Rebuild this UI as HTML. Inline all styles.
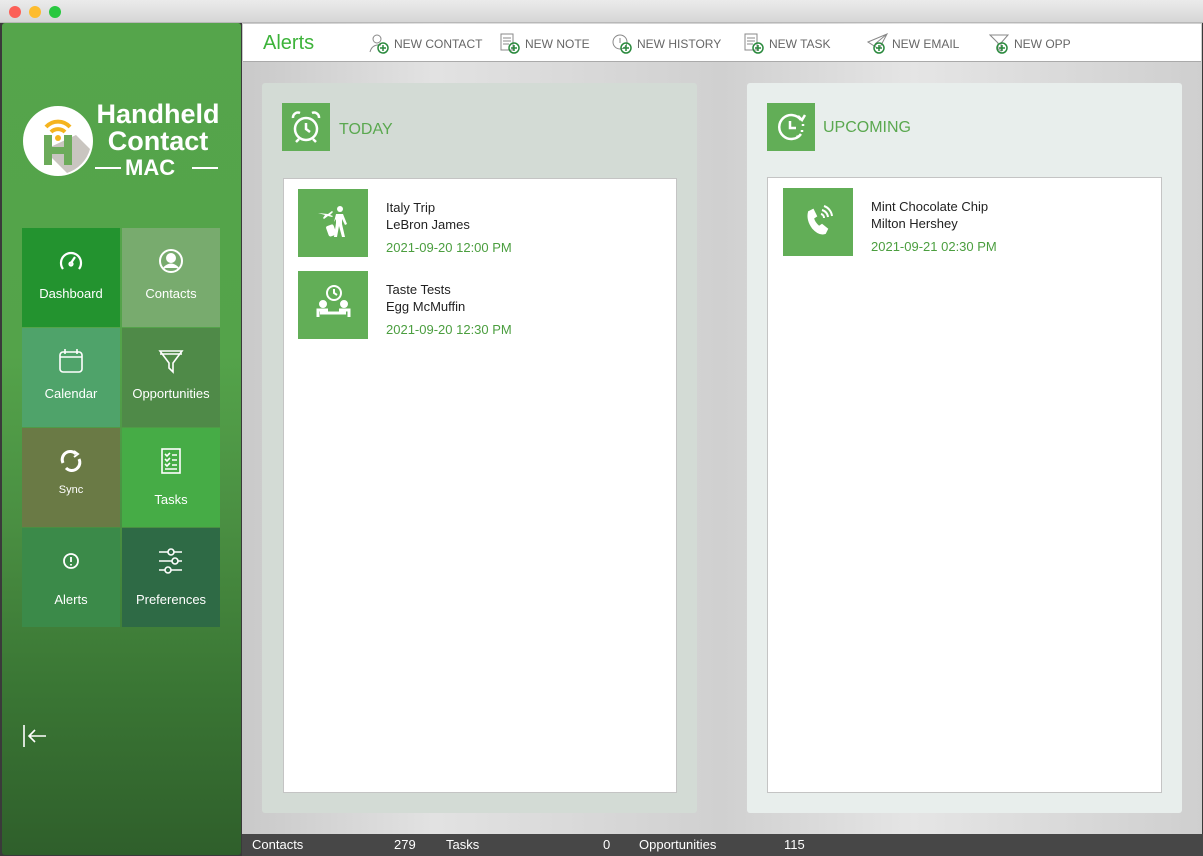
<!DOCTYPE html>
<html><head><meta charset="utf-8"><style>
*{margin:0;padding:0;box-sizing:border-box}
body{width:1203px;height:856px;overflow:hidden;font-family:"Liberation Sans",sans-serif;background:#3a3a3a;position:relative}
.abs{position:absolute}
.title{left:0;top:0;width:1203px;height:23px;background:linear-gradient(#ebebeb,#d6d6d6);border-bottom:1px solid #b8b8b8}
.dot{top:6px;width:12px;height:12px;border-radius:50%}
.side{left:2px;top:23px;width:239px;height:832px;background:linear-gradient(#55a54b 0%,#54a34a 40%,#4a8f42 60%,#3a7634 80%,#2f5f2b 100%);border-radius:3px}
.tile{width:98px;height:99px;color:#fff;font-size:13px;text-align:center}
.tile svg{position:absolute;left:36px;top:20px}
.tile span{position:absolute;left:0;right:0;top:58px}
.main{left:242px;top:23px;width:960px;height:811px;background:linear-gradient(90deg,#c9c9c9,#e2e2e2 20%,#d0d0d0 50%,#e5e5e5 70%,#cfcfcf)}
.hdr{left:243px;top:24px;width:958px;height:38px;background:#fff;border-bottom:1px solid #aaa}
.tb{top:9px;font-size:12px;color:#666;display:flex;align-items:center}
.tb svg{margin-right:3px}
.ic{width:70px;height:68px;background:#62ae57}
.it{font-size:13px;color:#222;line-height:17px}
.dt{font-size:13px;color:#4b9e3f}
.status{left:242px;top:834px;width:961px;height:22px;background:#474747;color:#fff;font-size:13px}
.status span{position:absolute;top:3px}
</style></head><body>
<div class="abs title"></div>
<div class="abs dot" style="left:9px;background:#fc5f57"></div>
<div class="abs dot" style="left:29px;background:#fdbc2e"></div>
<div class="abs dot" style="left:49px;background:#29c840"></div>

<div class="abs side">
 <svg class="abs" style="left:20px;top:82px" width="72" height="72" viewBox="0 0 72 72">
  <circle cx="36" cy="36" r="35" fill="#fff"/>
  <path d="M22 45 L45 68 A35 35 0 0 0 68 44 L54 30 Z" fill="#c9c5c0"/>
  <rect x="22" y="30" width="8" height="30" fill="#6cab5a"/><rect x="42" y="30" width="8" height="30" fill="#6cab5a"/><rect x="22" y="42" width="28" height="7" fill="#6cab5a"/>
  <path d="M24 22 A16 16 0 0 1 48 22" stroke="#f5b41f" stroke-width="4" fill="none"/>
  <path d="M29 27 A10 10 0 0 1 43 27" stroke="#f5b41f" stroke-width="4" fill="none"/>
  <circle cx="36" cy="33" r="3" fill="#f5b41f"/>
 </svg>
 <div class="abs" style="left:92px;top:78px;color:#fff;font-weight:bold;font-size:27px;line-height:27px;text-align:center;width:128px">Handheld<br>Contact</div>
 <div class="abs" style="left:93px;top:144px;width:26px;height:2px;background:#fff"></div>
 <div class="abs" style="left:123px;top:132px;color:#fff;font-weight:bold;font-size:22px">MAC</div>
 <div class="abs" style="left:190px;top:144px;width:26px;height:2px;background:#fff"></div>

 <div class="abs tile" style="left:20px;top:205px;background:#23932f"><svg width="26" height="26" viewBox="0 0 26 26" fill="none" stroke="#fff" stroke-width="2.2"><path d="M5 21 A10 10 0 1 1 21 21"/><path d="M13 15 L17 9"/><circle cx="13" cy="16" r="1.5"/></svg><span>Dashboard</span></div>
 <div class="abs tile" style="left:120px;top:205px;background:#78ab6e"><svg width="26" height="26" viewBox="0 0 26 26" fill="none" stroke="#fff" stroke-width="2"><circle cx="13" cy="13" r="11"/><circle cx="13" cy="10" r="4" fill="#fff"/><path d="M6 20 Q13 13 20 20" fill="#fff"/></svg><span>Contacts</span></div>
 <div class="abs tile" style="left:20px;top:305px;background:#4fa36a"><svg width="26" height="26" viewBox="0 0 26 26" fill="none" stroke="#fff" stroke-width="1.6"><rect x="2" y="4" width="22" height="20" rx="3"/><path d="M2 9 H24 M7 1 V6 M19 1 V6"/></svg><span>Calendar</span></div>
 <div class="abs tile" style="left:120px;top:305px;background:#4f8a48"><svg width="26" height="26" viewBox="0 0 26 26" fill="none" stroke="#fff" stroke-width="1.6"><path d="M2 3 H24 L15 15 V24 L11 20 V15 Z"/><path d="M2 6 H24"/></svg><span>Opportunities</span></div>
 <div class="abs tile" style="left:20px;top:405px;background:#6a7a45"><svg width="26" height="26" viewBox="0 0 26 26" fill="none" stroke="#fff" stroke-width="3"><path d="M5 15 A8 8 0 0 1 18 6"/><path d="M21 11 A8 8 0 0 1 8 20"/><path d="M16 3 L20 6 L16 9" stroke-width="2"/></svg><span style="font-size:11px;top:56px">Sync</span></div>
 <div class="abs tile" style="left:120px;top:405px;background:#46ac46"><svg width="26" height="26" viewBox="0 0 26 26" fill="none" stroke="#fff" stroke-width="1.6"><rect x="4" y="1" width="18" height="24"/><path d="M7 6 l2 2 3-3 M14 7 H19 M7 11 l2 2 3-3 M14 12 H19 M7 16 l2 2 3-3 M14 17 H19 M7 21 H19"/></svg><span style="top:64px">Tasks</span></div>
 <div class="abs tile" style="left:20px;top:505px;background:#3b8a49"><svg width="26" height="26" viewBox="0 0 26 26" fill="none" stroke="#fff" stroke-width="1.8"><circle cx="13" cy="13" r="7"/><path d="M13 9 V14 M13 16 V17.5"/></svg><span style="top:64px">Alerts</span></div>
 <div class="abs tile" style="left:120px;top:505px;background:#2e6a45"><svg width="26" height="26" viewBox="0 0 26 26" fill="none" stroke="#fff" stroke-width="1.6"><path d="M1 4 H24 M1 13 H24 M1 22 H24"/><circle cx="13" cy="4" r="3" fill="#2e6a45"/><circle cx="17" cy="13" r="3" fill="#2e6a45"/><circle cx="10" cy="22" r="3" fill="#2e6a45"/></svg><span style="top:64px">Preferences</span></div>

 <svg class="abs" style="left:20px;top:700px" width="26" height="26" viewBox="0 0 26 26" fill="none" stroke="#fff" stroke-width="1.6"><path d="M2 2 V24 M24 13 H7 M13 7 L7 13 L13 19"/></svg>
</div>

<div class="abs main"></div>
<div class="abs hdr">
 <div class="abs" style="left:20px;top:8px;font-size:20px;color:#3db33a">Alerts</div>
 <div class="abs tb" style="left:126px"><svg width="22" height="22" viewBox="0 0 22 22" fill="none" stroke="#888" stroke-width="1"><circle cx="8" cy="6" r="4"/><path d="M1 19 Q3 11 12 12"/><circle cx="14" cy="15" r="5" stroke="#2b8a3e" stroke-width="1.5"/><path d="M14 12 V18 M11 15 H17" stroke="#2b8a3e" stroke-width="1.5"/></svg>NEW CONTACT</div>
 <div class="abs tb" style="left:257px"><svg width="22" height="22" viewBox="0 0 22 22" fill="none" stroke="#888" stroke-width="1"><rect x="1" y="1" width="12" height="16"/><path d="M3 5 H11 M3 8 H11 M3 11 H9"/><circle cx="14" cy="15" r="5" stroke="#2b8a3e" stroke-width="1.5"/><path d="M14 12 V18 M11 15 H17" stroke="#2b8a3e" stroke-width="1.5"/></svg>NEW NOTE</div>
 <div class="abs tb" style="left:369px"><svg width="22" height="22" viewBox="0 0 22 22" fill="none" stroke="#888" stroke-width="1"><circle cx="8" cy="9" r="7"/><path d="M8 5 V10"/><circle cx="14" cy="15" r="5" stroke="#2b8a3e" stroke-width="1.5"/><path d="M14 12 V18 M11 15 H17" stroke="#2b8a3e" stroke-width="1.5"/></svg>NEW HISTORY</div>
 <div class="abs tb" style="left:501px"><svg width="22" height="22" viewBox="0 0 22 22" fill="none" stroke="#888" stroke-width="1"><rect x="1" y="1" width="12" height="16"/><path d="M3 5 H11 M3 8 H11 M3 11 H9"/><circle cx="14" cy="15" r="5" stroke="#2b8a3e" stroke-width="1.5"/><path d="M14 12 V18 M11 15 H17" stroke="#2b8a3e" stroke-width="1.5"/></svg>NEW TASK</div>
 <div class="abs tb" style="left:624px"><svg width="22" height="22" viewBox="0 0 22 22" fill="none" stroke="#888" stroke-width="1"><path d="M1 9 L20 1 L12 16 Z M20 1 L8 11"/><circle cx="12" cy="15" r="5" stroke="#2b8a3e" stroke-width="1.5"/><path d="M12 12 V18 M9 15 H15" stroke="#2b8a3e" stroke-width="1.5"/></svg>NEW EMAIL</div>
 <div class="abs tb" style="left:746px"><svg width="22" height="22" viewBox="0 0 22 22" fill="none" stroke="#888" stroke-width="1"><path d="M1 2 H19 L12 10 V18 L9 16 V10 Z"/><circle cx="13" cy="15" r="5" stroke="#2b8a3e" stroke-width="1.5"/><path d="M13 12 V18 M10 15 H16" stroke="#2b8a3e" stroke-width="1.5"/></svg>NEW OPP</div>
</div>

<div class="abs" style="left:262px;top:83px;width:435px;height:730px;background:#d3dbd5;border-radius:3px"></div>
<div class="abs ic" style="left:282px;top:103px;width:48px;height:48px"><svg width="48" height="48" viewBox="0 0 48 48" fill="none" stroke="#fff" stroke-width="2.5"><circle cx="24" cy="26" r="11"/><path d="M24 20 V26 L28 29 M11 15 A5 5 0 0 1 18 10 M37 15 A5 5 0 0 0 30 10 M17 36 L14 39 M31 36 L34 39"/></svg></div>
<div class="abs" style="left:339px;top:121px;font-size:16px;color:#5aa84f">TODAY</div>
<div class="abs" style="left:283px;top:178px;width:394px;height:615px;background:#fff;border:1px solid #c4c4c4"></div>
<div class="abs ic" style="left:298px;top:189px"><svg width="70" height="68" viewBox="0 0 70 68" fill="#fff"><path d="M20 24 l10 1 4-3 1 1-3 3 3 1-1 1-4-1-4 3-1-1 2-3z"/><circle cx="42" cy="20" r="3"/><path d="M38 25 h7 l4 10 -2 1 -3-6 v5 l3 13 h-3 l-3-11 -2 11 h-3 l2-14 v-4 l-2 3z"/><rect x="29" y="36" width="8" height="11" rx="2" transform="rotate(-20 33 41)"/></svg></div>
<div class="abs it" style="left:386px;top:199px">Italy Trip<br>LeBron James</div>
<div class="abs dt" style="left:386px;top:240px">2021-09-20 12:00 PM</div>
<div class="abs ic" style="left:298px;top:271px"><svg width="70" height="68" viewBox="0 0 70 68" fill="none" stroke="#fff" stroke-width="2"><circle cx="36" cy="22" r="7"/><path d="M36 18 V22 L39 24"/><circle cx="25" cy="33" r="3" fill="#fff"/><circle cx="46" cy="33" r="3" fill="#fff"/><path d="M20 46 V39 H30 M51 46 V39 H41 M22 42 H48" stroke-width="3"/></svg></div>
<div class="abs it" style="left:386px;top:281px">Taste Tests<br>Egg McMuffin</div>
<div class="abs dt" style="left:386px;top:322px">2021-09-20 12:30 PM</div>

<div class="abs" style="left:747px;top:83px;width:435px;height:730px;background:#e8eeec;border-radius:3px"></div>
<div class="abs ic" style="left:767px;top:103px;width:48px;height:48px"><svg width="48" height="48" viewBox="0 0 48 48" fill="none" stroke="#fff" stroke-width="2.5"><path d="M34 17 A12 12 0 1 0 34 31" /><path d="M23 18 V25 H29"/><path d="M36 21 V23 M35 27 V29 M31 33 l-1 1" stroke-dasharray="2 2"/><path d="M31 13 l4 4 3-5"/></svg></div>
<div class="abs" style="left:823px;top:119px;font-size:16px;color:#5aa84f">UPCOMING</div>
<div class="abs" style="left:767px;top:177px;width:395px;height:616px;background:#fff;border:1px solid #c4c4c4"></div>
<div class="abs ic" style="left:783px;top:188px"><svg width="70" height="68" viewBox="0 0 70 68" fill="none" stroke="#fff" stroke-width="2"><path d="M26 24 l4-2 3 6 -3 2 q1 5 6 9 l3-2 5 4 -2 4 q-6 2 -12-5 q-6-8 -4-16z" fill="#fff"/><path d="M38 26 a4 4 0 0 1 3 4 M39 22 a8 8 0 0 1 6 7 M41 18 a12 12 0 0 1 8 10"/></svg></div>
<div class="abs it" style="left:871px;top:198px">Mint Chocolate Chip<br>Milton Hershey</div>
<div class="abs dt" style="left:871px;top:239px">2021-09-21 02:30 PM</div>

<div class="abs status"><span style="left:10px">Contacts</span><span style="left:152px">279</span><span style="left:204px">Tasks</span><span style="left:361px">0</span><span style="left:397px">Opportunities</span><span style="left:542px">115</span></div>
</body></html>
